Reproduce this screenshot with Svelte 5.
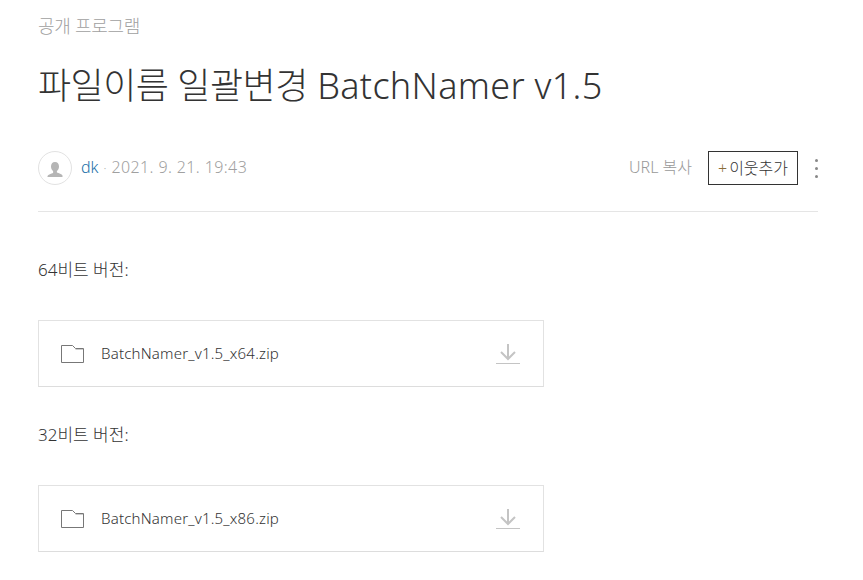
<script>
  const files = [
    { label: '64비트 버전:', name: 'BatchNamer_v1.5_x64.zip' },
    { label: '32비트 버전:', name: 'BatchNamer_v1.5_x86.zip' }
  ];
</script>

<main>
  <div class="category">공개 프로그램</div>
  <h1><span class="ko">파일이름 일괄변경</span> <span class="en">BatchNamer v1.5</span></h1>

  <div class="meta">
    <div class="avatar">
      <svg width="18" height="18" viewBox="0 0 18 18">
        <path d="M9 1c2.600 0 4 2 4 4.400 0 2-.9 3.700-2.100 4.500v1.500c1.800.8 5 1.400 5.600 3.100v1.500H1.500V15c.6-1.700 3.800-2.300 5.600-3.100V9.900C5.900 9.100 5 7.400 5 5.400 5 3 6.400 1 9 1z" fill="#b5b5b5" />
      </svg>
    </div>
    <a class="author" href="#top">dk</a>
    <span class="date"><span class="dot">·</span> 2021. 9. 21. 19:43</span>
    <span class="spacer"></span>
    <span class="copy">URL 복사</span>
    <button class="follow"><span class="plus">+</span>이웃추가</button>
    <div class="more"><i></i><i></i><i></i></div>
  </div>

  <div class="body">
    {#each files as file}
      <p>{file.label}</p>
      <div class="file">
        <svg class="folder" width="24" height="20" viewBox="0 0 24 20">
          <path d="M1.500 1.500h11l3 3h8v14h-22z" fill="none" stroke="#777" stroke-width="1" />
          <path d="M15.500 5.500h7.500" stroke="#ccc" stroke-width="1" />
        </svg>
        <span class="name">{file.name}</span>
        <svg class="down" width="24" height="22" viewBox="0 0 24 22">
          <path d="M12 1v14M5 9l7 7 7-7" fill="none" stroke="#c4c4c4" stroke-width="2" />
          <path d="M0 20.500h24" stroke="#c4c4c4" stroke-width="1" />
        </svg>
      </div>
    {/each}
  </div>
</main>

<style>
  :global(body) {
    margin: 0;
    background: #fff;
    overflow: hidden;
  }

  main {
    height: 580px;
    overflow: hidden;
    box-sizing: border-box;
    padding: 15px 45px 0 38px;
    font-family: "Noto Sans", "Noto Sans CJK KR", sans-serif;
    font-weight: 300;
    color: #333;
  }

  .category {
    font-size: 18px;
    line-height: 22px;
    letter-spacing: -0.3px;
    color: #a0a0a0;
  }

  h1 {
    margin: 26px 0 0;
    font-size: 36px;
    line-height: 46px;
    font-weight: 300;
    color: #333;
  }

  .ko {
    letter-spacing: -0.5px;
  }

  .en {
    letter-spacing: 0.3px;
  }

  .meta {
    display: flex;
    align-items: center;
    margin-top: 42px;
    padding-bottom: 26px;
    border-bottom: 1px solid #e5e5e5;
    font-size: 16px;
  }

  .avatar {
    width: 32px;
    height: 32px;
    border: 1px solid #e2e2e2;
    border-radius: 50%;
    display: flex;
    align-items: center;
    justify-content: center;
    margin-right: 9px;
  }

  .avatar svg {
    margin-top: 4px;
  }

  .author {
    color: #1a6fa8;
    text-decoration: none;
    margin-top: -2px;
  }

  .date {
    color: #a0a0a0;
    margin-left: 5px;
    margin-top: -2px;
    letter-spacing: 0.4px;
  }

  .dot {
    font-size: 12px;
  }

  .spacer {
    flex: 1;
  }

  .copy {
    font-size: 16px;
    color: #999;
    margin: -4px 16px 0 0;
  }

  .follow {
    width: 90px;
    height: 34px;
    padding: 0 0 2px;
    border: 1px solid #333;
    background: #fff;
    font: inherit;
    font-size: 16px;
    color: #333;
    box-sizing: border-box;
  }

  .plus {
    color: #8a6d3b;
    margin-right: 2px;
  }

  .more {
    display: flex;
    flex-direction: column;
    gap: 5px;
    width: 20px;
    margin-left: 8px;
    margin-right: -8px;
    align-items: center;
  }

  .more i {
    width: 3px;
    height: 3px;
    border-radius: 50%;
    background: #888;
  }

  .body {
    margin-top: 44px;
  }

  p {
    margin: 0;
    font-size: 17px;
    line-height: 28px;
    color: #333;
  }

  .file {
    width: 506px;
    box-sizing: border-box;
    height: 67px;
    margin: 36px 0 34px;
    border: 1px solid #e2e2e2;
    border-bottom-color: #ddd;
    display: flex;
    align-items: center;
    padding: 0 23px 0 21px;
  }

  .name {
    margin: -2px 0 0 17px;
    font-size: 15px;
    letter-spacing: 0.2px;
    flex: 1;
    color: #333;
  }
</style>
